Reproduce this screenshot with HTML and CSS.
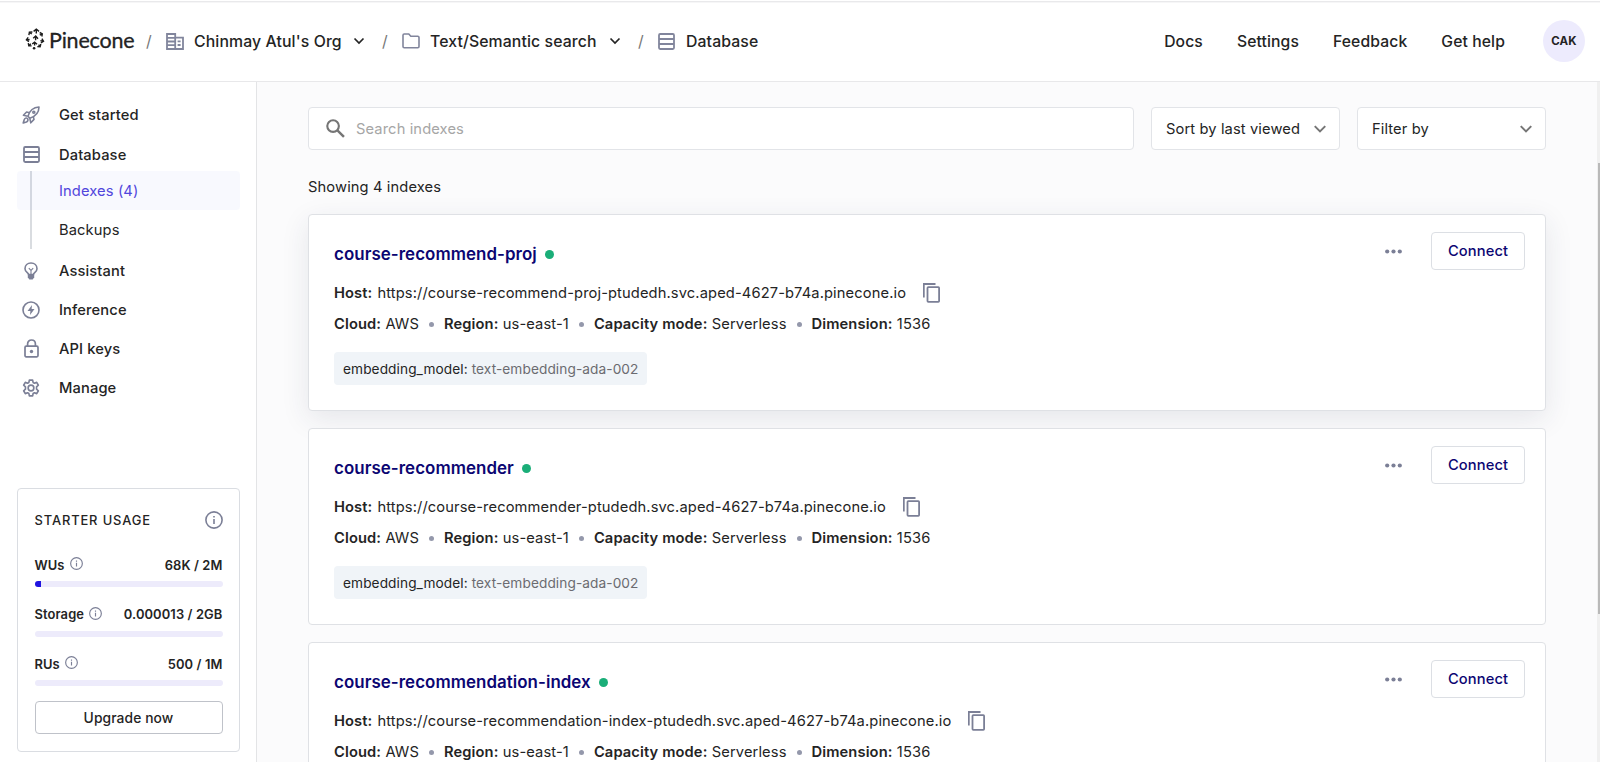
FILE: index.html
```html
<!DOCTYPE html>
<html lang="en">
<head>
<meta charset="utf-8">
<title>Pinecone</title>
<link rel="stylesheet" href="styles.css">
</head>
<body>
<svg class="sprite" xmlns="http://www.w3.org/2000/svg">
  <symbol id="logo" viewBox="0 0 20 22"><g fill="none" stroke="#1c1c1c" stroke-width="1.4"><path d="M11.3 1.200v4.200M8.600 3.400l2.700-2.200 2.700 2.200"/><path d="M10.600 8.300v4M8.200 10.200l2.500-2.200 2.300 2.700"/><path d="M9.600 14.500v3M7.200 16l2.400-1.900 2.400 2.100"/><path d="M6.800 6 4.500 4.500M3.900 7.200l.5-3 3-.2"/><path d="M14.800 7.200l2.400-1.400M14.700 4.500l2.600 1.300-.5 2.700"/><path d="M4.600 11.500l-3 .4M3.200 9.300 1.400 11.900l2.500 1.700"/><path d="M15.400 12.600l3 .7M16.900 10.600l1.600 2.700-2.600 1.600"/><path d="M5.800 15.800l-1.900 1.900M3.300 15.100l.5 2.700 2.800.1"/><path d="M13.600 16.600l1.500 2.200M15.800 16l-.7 2.800-2.800-.2"/></g><circle cx="9.100" cy="20.300" r="1.300" fill="#1c1c1c"/></symbol>
  <symbol id="org" viewBox="0 0 18 17"><path d="M1 1h8.2v15H1zM9.2 4.6H17V16H9.2M1 4.8h8M1 8.5h8M1 12.2h8M11.6 8.4h3M11.6 12h3" fill="none" stroke="currentColor" stroke-width="1.8"/></symbol>
  <symbol id="folder" viewBox="0 0 18 16"><path d="M1 2.3C1 1.5 1.4 1 2.2 1h4.6l2 2.2h7c.8 0 1.2.5 1.2 1.2v9.1c0 .8-.4 1.2-1.2 1.2H2.2C1.4 14.700 1 14.300 1 13.500z" fill="none" stroke="currentColor" stroke-width="1.6"/></symbol>
  <symbol id="db" viewBox="0 0 17 17"><path d="M2.200 1h12.600q1.200 0 1.200 1.200v12.600q0 1.200-1.200 1.200H2.200Q1 16 1 14.800V2.200Q1 1 2.200 1zM1 6h15M1 11h15" fill="none" stroke="currentColor" stroke-width="1.800"/></symbol>
  <symbol id="chev" viewBox="0 0 12 8"><path d="M1.500 1.500 6 6l4.500-4.500" fill="none" stroke="currentColor" stroke-width="1.700"/></symbol>
  <symbol id="rocket" viewBox="0 0 18 18"><g fill="none" stroke="currentColor" stroke-width="1.600" stroke-linejoin="round"><path d="M6 10.300C7.500 5 11.500 1.200 17 1c-.1 5.500-3.800 9.500-9.200 11.200z"/><path d="M7.500 6.700 4.600 6 1.400 9.300l4.300 1M11.300 10.700l.7 2.700-3.200 3.400-1-4.500"/><path d="M5.500 12.500c-1.200-1-2.700-.4-3.300 1.200L1.200 17l3.200-1c1.600-.8 2-2.200 1.100-3.500z"/><circle cx="11.800" cy="6.200" r="1"/></g></symbol>
  <symbol id="bulb" viewBox="0 0 14 18"><g fill="none" stroke="currentColor" stroke-width="1.600"><path d="M4.600 12.500C4.500 10.900 1 10 1 6.700 1 3.300 3.600 1 7 1s6 2.300 6 5.700c0 3.300-3.500 4.200-3.600 5.800z"/><path d="M4.800 6.200 7 8.500l2.200-2.300M7 8.500v4" stroke-width="1.100"/></g><path d="M3.800 12h6.400v3.200L8.700 17.600H5.300l-1.500-2.400z" fill="currentColor"/></symbol>
  <symbol id="bolt" viewBox="0 0 18 18"><circle cx="9" cy="9" r="8" fill="none" stroke="currentColor" stroke-width="1.600"/><path d="M10 4 5.500 9.900h2.900L8 14l4.500-5.900H9.600z" fill="currentColor"/></symbol>
  <symbol id="lock" viewBox="0 0 15 19"><path d="M2.200 7.200h10.600q1.200 0 1.200 1.200v8.200q0 1.200-1.200 1.200H2.200Q1 17.800 1 16.600V8.400q0-1.200 1.200-1.200zM3.600 7.200V5.100C3.600 2.700 5.200 1 7.500 1s3.900 1.700 3.900 4.100v2.100" fill="none" stroke="currentColor" stroke-width="1.700"/><circle cx="7.500" cy="12.500" r="1.700" fill="currentColor"/></symbol>
  <symbol id="gear" viewBox="0 0 24 24"><g fill="none" stroke="currentColor" stroke-width="2.200" stroke-linejoin="round"><path d="M9.800 1.500h4.400l.6 3.100 1.800 1 3-1.100 2.200 3.800-2.400 2.100v3.200l2.400 2.100-2.200 3.800-3-1.100-1.800 1-.6 3.100H9.800l-.6-3.100-1.800-1-3 1.100-2.200-3.800 2.400-2.100v-3.200L2.200 8.300l2.200-3.800 3 1.100 1.800-1z"/><circle cx="12" cy="12" r="3.800"/></g></symbol>
  <symbol id="info" viewBox="0 0 18 18"><circle cx="9" cy="9" r="8.100" fill="none" stroke="currentColor" stroke-width="1.600"/><path d="M9 8v5M9 5v1.500" stroke="currentColor" stroke-width="1.600"/></symbol>
  <symbol id="search" viewBox="0 0 18 18"><circle cx="6.700" cy="6.700" r="5.500" fill="none" stroke="currentColor" stroke-width="2"/><path d="m10.800 10.800 6.200 6.200" stroke="currentColor" stroke-width="2.300"/></symbol>
  <symbol id="copy" viewBox="0 0 17 20"><path d="M.8 14.500V1h11.700" fill="none" stroke="currentColor" stroke-width="1.800"/><rect x="4.500" y="4.200" width="11.600" height="14.700" rx=".8" fill="none" stroke="currentColor" stroke-width="1.800"/></symbol>
  <symbol id="dots" viewBox="0 0 17 5"><g fill="currentColor"><circle cx="2.200" cy="2.500" r="2.100"/><circle cx="8.500" cy="2.500" r="2.100"/><circle cx="14.800" cy="2.500" r="2.100"/></g></symbol>
</svg>

<header class="header">
  <div class="brand"><svg class="brand-mark"><use href="#logo"/></svg><span class="brand-name">Pinecone</span></div>
  <span class="slash slash-1">/</span>
  <svg class="icon-org"><use href="#org"/></svg>
  <span class="crumb crumb-org">Chinmay Atul's Org</span>
  <svg class="chev"><use href="#chev"/></svg>
  <span class="slash slash-2">/</span>
  <svg class="icon-folder"><use href="#folder"/></svg>
  <span class="crumb crumb-project">Text/Semantic search</span>
  <svg class="chev"><use href="#chev"/></svg>
  <span class="slash slash-2">/</span>
  <svg class="icon-db"><use href="#db"/></svg>
  <span class="crumb crumb-page">Database</span>
  <nav class="links"><a>Docs</a><a>Settings</a><a>Feedback</a><a>Get help</a></nav>
  <div class="avatar">CAK</div>
</header>

<div class="body">
  <aside class="sidebar">
    <nav class="menu">
      <a class="item item-start"><span class="item-icon"><svg width="18" height="18"><use href="#rocket"/></svg></span>Get started</a>
      <a class="item item-db"><span class="item-icon"><svg width="17" height="17"><use href="#db"/></svg></span>Database</a>
      <div class="submenu">
        <a class="sub active">Indexes (4)</a>
        <a class="sub">Backups</a>
      </div>
      <a class="item item-first"><span class="item-icon"><svg width="14" height="18"><use href="#bulb"/></svg></span>Assistant</a>
      <a class="item"><span class="item-icon"><svg width="18" height="18"><use href="#bolt"/></svg></span>Inference</a>
      <a class="item"><span class="item-icon"><svg width="15" height="19"><use href="#lock"/></svg></span>API keys</a>
      <a class="item"><span class="item-icon"><svg width="18" height="18"><use href="#gear"/></svg></span>Manage</a>
    </nav>
    <section class="usage">
      <div class="usage-head"><span>STARTER USAGE</span><svg class="info-lg"><use href="#info"/></svg></div>
      <div class="meter"><div class="meter-row"><span>WUs</span><svg class="info-sm"><use href="#info"/></svg><b>68K / 2M</b></div><div class="bar"><div class="fill" style="width:3.4%"></div></div></div>
      <div class="meter"><div class="meter-row"><span>Storage</span><svg class="info-sm"><use href="#info"/></svg><b>0.000013 / 2GB</b></div><div class="bar"></div></div>
      <div class="meter meter-last"><div class="meter-row"><span>RUs</span><svg class="info-sm"><use href="#info"/></svg><b>500 / 1M</b></div><div class="bar"></div></div>
      <div class="upgrade">Upgrade now</div>
    </section>
  </aside>

  <main class="main">
    <div class="toolbar">
      <div class="search"><svg class="search-icon"><use href="#search"/></svg><span>Search indexes</span></div>
      <div class="select"><span class="sort-label">Sort by last viewed</span><svg class="caret"><use href="#chev"/></svg></div>
      <div class="select"><span>Filter by</span><svg class="caret"><use href="#chev"/></svg></div>
    </div>
    <div class="count">Showing 4 indexes</div>

    <article class="card raised">
      <div class="info">
        <h2 class="title"><span>course-recommend-proj</span><i class="status"></i></h2>
        <div class="host"><b>Host:</b><span class="url">https://course-recommend-proj-ptudedh.svc.aped-4627-b74a.pinecone.io</span><svg class="copy"><use href="#copy"/></svg></div>
        <div class="specs"><b>Cloud:</b> AWS<i></i><b>Region:</b> us-east-1<i></i><b>Capacity mode:</b> Serverless<i></i><b>Dimension:</b> 1536</div>
        <div class="chip"><span>embedding_model:</span> text-embedding-ada-002</div>
      </div>
      <div class="actions"><svg class="dots"><use href="#dots"/></svg><div class="connect">Connect</div></div>
    </article>

    <article class="card">
      <div class="info">
        <h2 class="title"><span>course-recommender</span><i class="status"></i></h2>
        <div class="host"><b>Host:</b><span class="url">https://course-recommender-ptudedh.svc.aped-4627-b74a.pinecone.io</span><svg class="copy"><use href="#copy"/></svg></div>
        <div class="specs"><b>Cloud:</b> AWS<i></i><b>Region:</b> us-east-1<i></i><b>Capacity mode:</b> Serverless<i></i><b>Dimension:</b> 1536</div>
        <div class="chip"><span>embedding_model:</span> text-embedding-ada-002</div>
      </div>
      <div class="actions"><svg class="dots"><use href="#dots"/></svg><div class="connect">Connect</div></div>
    </article>

    <article class="card">
      <div class="info">
        <h2 class="title"><span>course-recommendation-index</span><i class="status"></i></h2>
        <div class="host"><b>Host:</b><span class="url">https://course-recommendation-index-ptudedh.svc.aped-4627-b74a.pinecone.io</span><svg class="copy"><use href="#copy"/></svg></div>
        <div class="specs"><b>Cloud:</b> AWS<i></i><b>Region:</b> us-east-1<i></i><b>Capacity mode:</b> Serverless<i></i><b>Dimension:</b> 1536</div>
      </div>
      <div class="actions"><svg class="dots"><use href="#dots"/></svg><div class="connect">Connect</div></div>
    </article>
  </main>
  <div class="scroll"><div class="thumb"></div></div>
</div>
</body>
</html>
```
FILE: styles.css
```css
* { box-sizing: border-box; }
body { margin: 0; width: 1600px; height: 762px; overflow: hidden; font-family: Inter, "Liberation Sans", sans-serif; font-size: 14.7px; color: #242424; background: #fff; white-space: nowrap; letter-spacing: 0.115px; }
svg { display: block; flex: none; }
.sprite { position: absolute; width: 0; height: 0; }

.header { height: 82px; padding: 2px 15px 2px 25px; border-top: 1px solid #fff; border-bottom: 1px solid #e8e8ea; display: flex; align-items: center; font-size: 15.8px; font-weight: 500; box-shadow: inset 0 1px 0 #e9e9eb, inset 0 2px 0 #f6f6f7; }
.brand { display: flex; width: 109px; padding-bottom: 2px; }
.brand-mark { width: 20px; height: 22px; margin: 0 4px 0 0; }
.brand-name { font-family: Lato, sans-serif; font-weight: 400; font-size: 21.5px; line-height: 24px; letter-spacing: -0.2px; -webkit-text-stroke: 0.3px #1c1c1c; }
.slash { color: #777; font-weight: 400; width: 6px; text-align: center; }
.slash-1 { margin: 0 14px 0 12px; }
.slash-2 { margin: 0 14px 0 17px; }
.icon-org { width: 18px; height: 17px; color: #81859c; }
.icon-folder { width: 18px; height: 16px; color: #81859c; }
.icon-db { width: 17px; height: 17px; color: #81859c; }
.crumb { margin-left: 10px; }
.crumb-org { width: 159px; }
.crumb-project { width: 179px; }
.crumb-page { margin-left: 11px; }
.chev { width: 12px; height: 8px; }
.links { display: flex; gap: 34px; margin-left: auto; font-size: 15.7px; }
.avatar { margin-left: 38px; width: 42px; height: 42px; border-radius: 50%; background: #edebfd; font-size: 11.5px; font-weight: 700; display: flex; align-items: center; justify-content: center; }

.body { display: flex; height: 680px; }
.sidebar { width: 257px; border-right: 1px solid #e3e4e6; padding: 14px 16px 10px 17px; display: flex; flex-direction: column; justify-content: space-between; }
.menu { display: flex; flex-direction: column; font-weight: 500; }
.item { height: 39px; display: flex; align-items: center; }
.item-start { height: 38px; }
.item-db { height: 37px; padding-top: 4px; }
.item-first { margin-top: 2px; }
.item-icon { width: 28px; margin-right: 14px; display: flex; justify-content: center; color: #7b7f96; }
.submenu { background: linear-gradient(#d9dce0, #d9dce0) 13px 0 / 2px 100% no-repeat; }
.sub { height: 39px; padding: 1px 0 0 42px; display: flex; align-items: center; font-weight: 400; border-radius: 4px; }
.active { color: #5146dc; background: rgba(82, 100, 240, 0.04); }

.usage { height: 264px; border: 1px solid #dadde2; border-radius: 4px; padding: 20px 16.500px 17px; display: flex; flex-direction: column; font-size: 12.9px; }
.usage-head { display: flex; align-items: center; justify-content: space-between; height: 22px; font-weight: 500; letter-spacing: 0.88px; margin-bottom: 24px; }
.info-lg { width: 18px; height: 18px; color: #7b7f96; }
.meter { flex: none; height: 49.600px; font-weight: 600; }
.meter-last { height: 40px; }
.meter-row { display: flex; align-items: center; height: 20px; margin-bottom: 6px; }
.meter-row b { margin-left: auto; font-weight: 600; }
.info-sm { width: 13px; height: 13px; margin: -3px 0 0 5px; color: #7b7f96; }
.bar { height: 6px; border-radius: 3px; background: #edebfb; overflow: hidden; }
.fill { height: 100%; background: #2014e0; }
.upgrade { height: 33px; flex: none; margin-top: auto; border: 1px solid #bfc2c9; border-radius: 4px; display: flex; align-items: center; justify-content: center; font-size: 13.8px; font-weight: 500; }

.main { flex: 1; background: #fbfbfc; padding: 25px 54px 0 51px; overflow: hidden; }
.toolbar { display: flex; gap: 17px; height: 43px; }
.search, .select { background: #fff; border: 1px solid #e2e4e8; border-radius: 4px; display: flex; align-items: center; }
.search { flex: 1; padding-left: 17px; color: #a6a6a6; }
.search-icon { width: 19px; height: 19px; margin-right: 11px; color: #757575; }
.select { width: 189px; padding: 0 12px 0 14px; justify-content: space-between; }
.caret { width: 14px; height: 10px; color: #757575; stroke-width: 2; }
.count { height: 64px; padding-top: 26px; line-height: 22px; }
.card { height: 197px; margin-bottom: 17px; background: #fff; border: 1px solid #dfe1e5; border-radius: 4px; padding: 17px 20px 0 25px; display: flex; justify-content: space-between; }
.raised { box-shadow: 0 8px 28px rgba(40, 50, 80, 0.10); }
.title { margin: 8px 0 13px; height: 28px; display: flex; align-items: center; font-size: 16.900px; font-weight: 600; letter-spacing: 0.06px; color: #0b0672; }
.status { width: 9px; height: 9px; border-radius: 50%; background: #1aae78; margin-left: 8px; }
.host { height: 23px; display: flex; align-items: center; margin-bottom: 9px; }
.host b { margin-right: 5px; }
b { font-weight: 600; }
.copy { width: 17px; height: 20px; margin-left: 17px; color: #7b7f96; }
.specs { height: 22px; line-height: 22px; }
.specs i { display: inline-block; width: 5px; height: 5px; border-radius: 50%; background: #9498ab; margin: 0 10px; vertical-align: 2px; }
.chip { margin-top: 17px; width: 313px; height: 33px; line-height: 34px; border-radius: 4px; background: #f0f4f8; padding-left: 9px; font-size: 13.7px; letter-spacing: 0.08px; color: #6b6b70; }
.chip span { color: #242424; }
.actions { display: flex; align-items: center; height: 38px; }
.dots { width: 17px; height: 5px; color: #7b7f96; margin-right: 29px; }
.connect { width: 94px; height: 38px; border: 1px solid #dcdfe4; border-radius: 4px; padding-bottom: 1px; display: flex; align-items: center; justify-content: center; font-weight: 500; color: #0b0672; }
.scroll { width: 3px; margin-left: -3px; background: #f0f0f0; padding-top: 81px; }
.thumb { height: 451px; margin-left: 1px; background: #b9b9b9; }
```
